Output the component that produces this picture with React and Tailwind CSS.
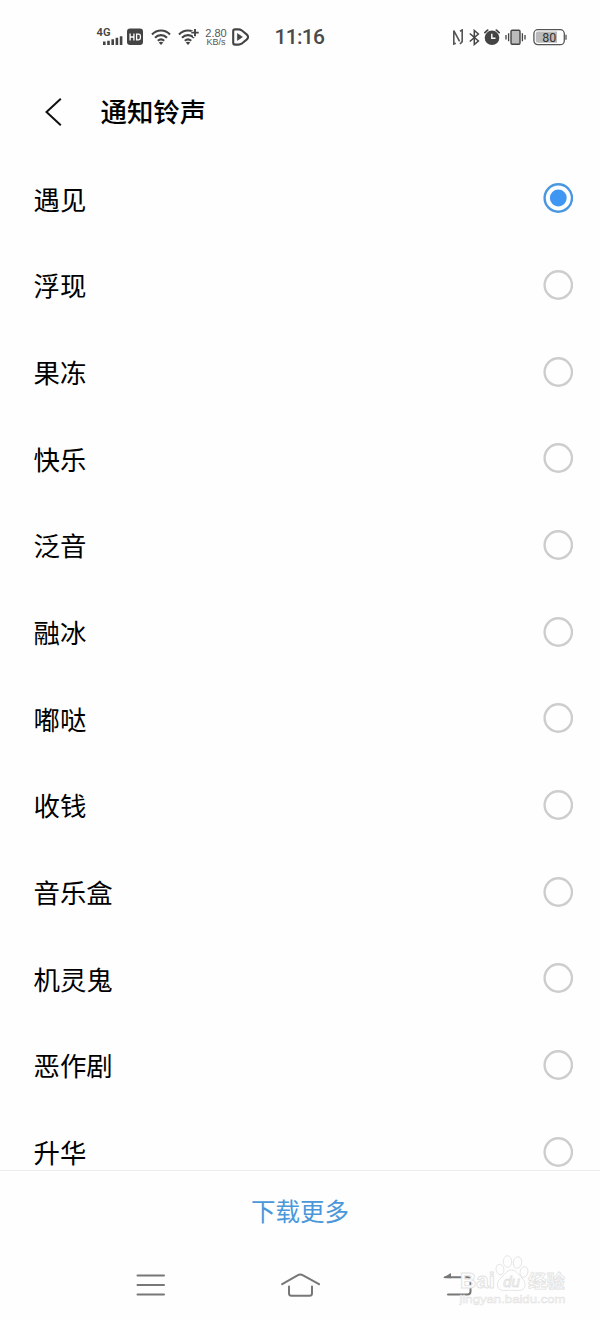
import React, { useState } from 'react';

const RINGTONES = [
  '遇见',
  '浮现',
  '果冻',
  '快乐',
  '泛音',
  '融冰',
  '嘟哒',
  '收钱',
  '音乐盒',
  '机灵鬼',
  '恶作剧',
  '升华',
];

function WifiArcs() {
  return (
    <g fill="none" stroke="#444" strokeWidth="2.1">
      <path d="M1 6.4C6 1.2 14 1.2 19 6.4" />
      <path d="M4 9.8C7.4 6.2 12.6 6.2 16 9.8" />
      <path d="M6.8 12.8C8.7 11 11.3 11 13.2 12.8" />
      <path d="M10 17L7.7 14.5Q10 12.9 12.3 14.5Z" fill="#444" stroke="none" />
    </g>
  );
}

function StatusBar() {
  return (
    <div className="flex h-[72px] shrink-0 items-center pt-[2px] pl-24 font-['Roboto',sans-serif] text-[#4a4a4a]">
      {/* Signal */}
      <svg width="28" height="20" viewBox="0 0 28 20">
        <text x="0.5" y="9" fontSize="11" fontWeight="600" fill="#444" textLength="14" lengthAdjust="spacingAndGlyphs">4G</text>
        <path d="M7 14.5h2.6V18H7zM11.2 13.8h2.6V18h-2.6zM15.4 12.3h2.6V18h-2.6zM19.6 10.8h2.6V18h-2.6zM23.8 9.2h2.6V18h-2.6z" fill="#444" />
      </svg>

      {/* HD voice */}
      <svg className="ml-[3px]" width="16" height="18" viewBox="0 0 16 18">
        <rect x="0" y="0.5" width="16" height="16.5" rx="3" fill="#444" />
        <path d="M3.1 5.5v7M3.1 9h3.6M6.9 5.5v7M9.6 6.2h2q1.8 0 1.8 1.8v2q0 1.8-1.8 1.8h-2z" fill="none" stroke="#fff" strokeWidth="1.3" />
      </svg>

      {/* Wifi */}
      <svg className="ml-2" width="20" height="18" viewBox="0 0 20 18">
        <WifiArcs />
      </svg>
      <svg className="ml-[7px]" width="21" height="18" viewBox="0 0 21 18">
        <WifiArcs />
        <path d="M17 0v9M13.5 4.7h7.5" stroke="#fefefe" strokeWidth="4" />
        <path d="M17 1v7.2M13.3 4.6h7.4" stroke="#444" strokeWidth="1.9" />
      </svg>

      {/* Network speed */}
      <div className="ml-[6px] flex w-[22px] flex-col items-center pt-px font-['Liberation_Sans',sans-serif] text-[#555]">
        <span className="text-[11px] leading-[9px]">2.80</span>
        <span className="text-[9px] leading-[9px]">KB/s</span>
      </div>

      {/* Play badge */}
      <svg className="ml-[5px]" width="17" height="18" viewBox="0 0 17 18">
        <path
          d="M1.2 3.2Q1.2 1.4 3 1.4H6.5Q8.2 1.4 9.6 2.3L14.6 6.4Q17.6 9 14.6 11.6L9.6 15.7Q8.2 16.6 6.5 16.6H3Q1.2 16.6 1.2 14.8Z"
          fill="none"
          stroke="#444"
          strokeWidth="2.1"
        />
        <path d="M5.4 5.6L10.4 9L5.4 12.4Z" fill="#444" stroke="#444" strokeWidth="0.6" />
      </svg>

      <span className="ml-[25.5px] text-[21px] leading-none font-medium tracking-[-0.7px]">11:16</span>

      <div className="ml-auto flex items-center pr-[33px]">
        {/* NFC */}
        <svg width="12" height="16" viewBox="0 0 12 16" fill="none" stroke="#555" strokeWidth="1.6">
          <path d="M3.8 14.2L1.8 15V1.6L7.6 12.4" />
          <path d="M8 2.2L10.2 1V12.6L8 15" />
        </svg>
        {/* Bluetooth */}
        <svg className="ml-[5px]" width="11" height="17" viewBox="0 0 11 17" fill="none" stroke="#444" strokeWidth="1.5">
          <path d="M0.8 4.5L9.4 12L5.3 15.5V1.5L9.4 5L0.8 12.5" />
        </svg>
        {/* Alarm */}
        <svg className="ml-[4px]" width="16" height="17" viewBox="0 0 16 17">
          <circle cx="8" cy="8.8" r="7.3" fill="#444" />
          <path d="M0.9 3.6L3.6 1.2M15.1 3.6L12.4 1.2" stroke="#444" strokeWidth="1.8" strokeLinecap="round" />
          <path d="M7.8 4.8V9.2H11.5" fill="none" stroke="#fff" strokeWidth="1.4" />
        </svg>
        {/* Vibrate */}
        <svg className="ml-[5px]" width="21" height="17" viewBox="0 0 21 17">
          <rect x="6" y="1.3" width="9" height="14" rx="1.2" fill="#bbb" stroke="#444" strokeWidth="1.4" />
          <path d="M3.6 4.3v8M17.4 4.3v8" stroke="#444" strokeWidth="1.3" />
          <path d="M1 6.1v4.5M20 6.1v4.5" stroke="#444" strokeWidth="1.3" />
        </svg>
        {/* Battery */}
        <svg className="ml-[7px]" width="34" height="17" viewBox="0 0 34 17">
          <rect x="0.9" y="0.7" width="30.4" height="15" rx="4" fill="#fff" stroke="#555" strokeWidth="1.3" />
          <path d="M5 2.6H24V13.8H5Q2.8 13.8 2.8 11.6V4.8Q2.8 2.6 5 2.6Z" fill="#bbb" />
          <path d="M33 5.7v5" stroke="#555" strokeWidth="1.3" />
          <text x="16.2" y="12.7" fontSize="12.5" fill="#333" textAnchor="middle">80</text>
        </svg>
      </div>
    </div>
  );
}

function Radio({ checked }) {
  return (
    <svg width="30" height="30" viewBox="0 0 30 30" fill="none">
      <circle cx="15.3" cy="15" r="13.7" stroke={checked ? '#4997e0' : '#cdcdcd'} strokeWidth="2.4" />
      {checked && <circle cx="15.3" cy="15" r="8.4" fill="#3f97f3" />}
    </svg>
  );
}

function Watermark() {
  return (
    <svg
      className="pointer-events-none absolute right-[29px] bottom-[10px]"
      width="112"
      height="56"
      viewBox="0 0 112 56"
      fill="#fefefe"
      stroke="#e2e2e2"
      strokeWidth="0.9"
      fontFamily="'Liberation Sans', 'Noto Sans CJK SC', sans-serif"
    >
      <text x="1" y="33.5" fontSize="22.5" fontWeight="700" textLength="35" lengthAdjust="spacingAndGlyphs">Bai</text>
      <g>
        <ellipse cx="41" cy="15.5" rx="3.9" ry="5.3" transform="rotate(-12 41 15.5)" />
        <ellipse cx="48.5" cy="7.5" rx="4.2" ry="5.8" />
        <ellipse cx="58.5" cy="8.5" rx="4.2" ry="5.8" transform="rotate(10 58.5 8.5)" />
        <ellipse cx="65" cy="18" rx="3.9" ry="5.3" transform="rotate(12 65 18)" />
        <path d="M52.5 16C57 16 59 20 63 24C68 29 67 36.5 59.5 36.5C55 36.5 50 36 46 36.5C37.5 37 36.5 29.5 41 25C45 21 48 16 52.5 16Z" />
      </g>
      <text x="52.5" y="32.5" fontSize="15" fontStyle="italic" textAnchor="middle" strokeWidth="0.9">du</text>
      <text x="69" y="34" fontSize="18.5" fontWeight="700" strokeWidth="0.8">经验</text>
      <text x="0.5" y="49" fontSize="11" strokeWidth="0.5" textLength="106" lengthAdjust="spacingAndGlyphs">jingyan.baidu.com</text>
    </svg>
  );
}

function NavBar() {
  return (
    <nav className="relative flex h-[70px] shrink-0 items-center pr-[74px] pl-[76px]">
      <button className="flex flex-1 justify-center">
        <svg width="30" height="24" viewBox="0 0 30 24" stroke="#777" strokeWidth="2" strokeLinecap="round">
          <path d="M1.5 2.5h26.5M1.5 12h26.5M1.5 21.5h26.5" />
        </svg>
      </button>
      <button className="flex flex-1 justify-center">
        <svg width="40" height="26" viewBox="0 0 40 26" fill="none" stroke="#777" strokeWidth="2" strokeLinecap="round">
          <path d="M1.2 12.2L16.5 3.4Q19.3 1.6 22.1 3.4L38 12.2" />
          <path d="M8 14.5V21.2Q8 23.7 10.5 23.7H28.5Q31 23.7 31 21.2V14.5" />
        </svg>
      </button>
      <button className="flex flex-1 justify-center">
        <svg className="mr-[-14px]" width="30" height="24" viewBox="0 0 30 24" fill="none" stroke="#777" strokeWidth="2" strokeLinecap="round">
          <path d="M2 4.3H24.5Q27.5 4.3 27.5 7.3V18.5Q27.5 21.5 24.5 21.5H5" />
          <path d="M0 4.8L8 0V5.2Z" fill="#777" stroke="none" />
        </svg>
      </button>
      <Watermark />
    </nav>
  );
}

function App() {
  const [selected, setSelected] = useState(0);

  return (
    <div className="flex h-[1320px] w-[600px] flex-col overflow-hidden bg-[#fefefe] font-['Noto_Sans_CJK_SC',sans-serif] text-black">
      <StatusBar />

      {/* Header */}
      <header className="flex h-[83px] shrink-0 items-center pb-1 pl-[43px]">
        <svg width="20" height="30" viewBox="0 0 20 30" fill="none" stroke="#111" strokeWidth="2">
          <path d="M17.8 1.7L3.5 15L17.8 28.3" />
        </svg>
        <h1 className="ml-[37.5px] text-[26.4px] leading-none font-medium">通知铃声</h1>
      </header>

      {/* Ringtone list */}
      <ul className="min-h-0 flex-1 overflow-hidden">
        {RINGTONES.map((name, i) => (
          <li
            key={name}
            onClick={() => setSelected(i)}
            className="flex h-[86.67px] items-center justify-between pr-[27px] pl-[33.5px]"
          >
            <span className="pt-px text-[26.4px] leading-none">{name}</span>
            <Radio checked={i === selected} />
          </li>
        ))}
      </ul>

      {/* Footer */}
      <div className="flex h-20 shrink-0 items-center justify-center border-t border-[#ececec] pt-px">
        <button className="text-[24.5px] leading-none text-[#4a98da]">下载更多</button>
      </div>
      <NavBar />
    </div>
  );
}

export default App;
